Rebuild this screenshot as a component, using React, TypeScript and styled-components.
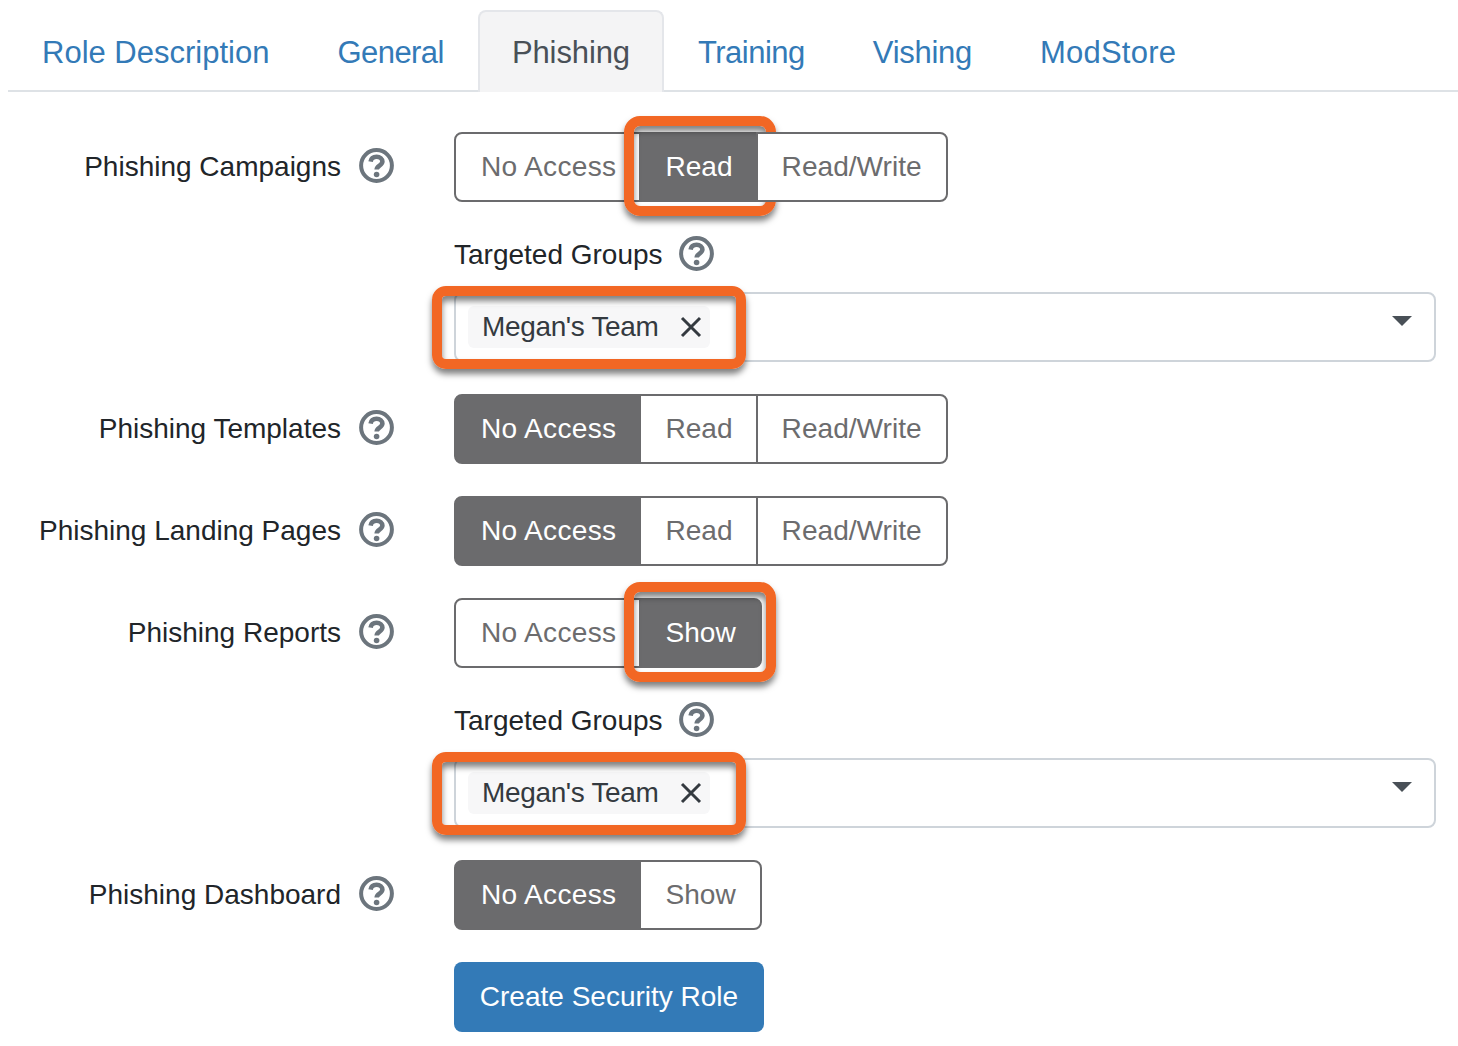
import React from 'react';
import styled, { createGlobalStyle } from 'styled-components';

const GlobalStyle = createGlobalStyle`
    html, body {
        margin: 0;
        background: #fff;
        font-family: 'Liberation Sans', Arial, sans-serif;
    }
`;

const tabs = [
    { name: 'Role Description', spacing: 0 },
    { name: 'General', spacing: -0.55 },
    { name: 'Phishing', spacing: -0.1 },
    { name: 'Training', spacing: -0.5 },
    { name: 'Vishing', spacing: -0.3 },
    { name: 'ModStore', spacing: 0.25 },
];

const HelpIcon = () => (
    <HelpSvg viewBox="0 0 35 35">
        <circle cx="17.5" cy="17.5" r="15.4" fill="none" stroke="currentColor" strokeWidth="4" />
        <path d="M11.6 13.6c.5-3.200 2.900-4.800 6-4.800 3.400 0 5.800 2 5.800 4.800 0 4-5.700 4-5.700 7.900" fill="none" stroke="currentColor" strokeWidth="4.600" />
        <circle cx="17.600" cy="26.500" r="2.800" fill="currentColor" />
    </HelpSvg>
);

interface AccessGroupProps {
    options: string[];
    active: string;
    marked?: boolean;
}

const AccessGroup = ({ options, active, marked }: AccessGroupProps) => (
    <Group>
        {options.map((option) => (
            <Segment key={option} $active={option === active}>
                {option}
                {marked && option === active && <ButtonHighlight />}
            </Segment>
        ))}
    </Group>
);

const TargetedGroups = () => (
    <TargetBlock>
        <TargetLabel>Targeted Groups <HelpIcon /></TargetLabel>
        <Select>
            <Tag>
                Megan's Team
                <svg width="22" height="22" viewBox="0 0 22 22">
                    <path d="M2 2 L20 20 M20 2 L2 20" stroke="#343a40" strokeWidth="3" fill="none" />
                </svg>
            </Tag>
            <Caret />
            <SelectHighlight />
        </Select>
    </TargetBlock>
);

export default function App() {
    return (
        <Page>
            <GlobalStyle />
            <Tabs>
                {tabs.map((tab) => (
                    <Tab key={tab.name} $active={tab.name === 'Phishing'} $spacing={tab.spacing}>{tab.name}</Tab>
                ))}
            </Tabs>
            <Form>
                <Row>
                    <Label>Phishing Campaigns <HelpIcon /></Label>
                    <Field>
                        <AccessGroup options={['No Access', 'Read', 'Read/Write']} active="Read" marked />
                        <TargetedGroups />
                    </Field>
                </Row>
                <Row>
                    <Label>Phishing Templates <HelpIcon /></Label>
                    <Field>
                        <AccessGroup options={['No Access', 'Read', 'Read/Write']} active="No Access" />
                    </Field>
                </Row>
                <Row>
                    <Label>Phishing Landing Pages <HelpIcon /></Label>
                    <Field>
                        <AccessGroup options={['No Access', 'Read', 'Read/Write']} active="No Access" />
                    </Field>
                </Row>
                <Row>
                    <Label>Phishing Reports <HelpIcon /></Label>
                    <Field>
                        <AccessGroup options={['No Access', 'Show']} active="Show" marked />
                        <TargetedGroups />
                    </Field>
                </Row>
                <Row>
                    <Label>Phishing Dashboard <HelpIcon /></Label>
                    <Field>
                        <AccessGroup options={['No Access', 'Show']} active="No Access" />
                    </Field>
                </Row>
                <Row>
                    <Label />
                    <Field>
                        <SubmitButton>Create Security Role</SubmitButton>
                    </Field>
                </Row>
            </Form>
        </Page>
    );
}

const Page = styled.div`
    width: 1458px;
    height: 1046px;
    padding: 10px 0 0 8px;
    box-sizing: border-box;
    overflow: hidden;
`;

const Tabs = styled.nav`
    display: flex;
    height: 82px;
    box-sizing: border-box;
    border-bottom: 2px solid #dee2e6;
    margin-bottom: 40px;
`;

const Tab = styled.a<{ $active?: boolean; $spacing: number }>`
    display: flex;
    align-items: center;
    height: 82px;
    box-sizing: border-box;
    padding: 1px 32px 0;
    border: 2px solid ${({ $active }) => ($active ? '#e4e6ea' : 'transparent')};
    border-bottom: 0;
    border-radius: 8px 8px 0 0;
    background: ${({ $active }) => ($active ? '#f4f4f5' : 'transparent')};
    color: ${({ $active }) => ($active ? '#495057' : '#337ab7')};
    font-size: 31px;
    letter-spacing: ${({ $spacing }) => $spacing}px;
`;

const Form = styled.div`
    display: flex;
    flex-direction: column;
    gap: 32px;
    padding-right: 22px;
`;

const Row = styled.div`
    display: flex;
    gap: 60px;
`;

const Label = styled.label`
    display: flex;
    justify-content: flex-end;
    align-items: center;
    gap: 18px;
    flex: 0 0 386px;
    height: 70px;
    padding-bottom: 1px;
    box-sizing: border-box;
    color: #212529;
    font-size: 28px;
`;

const HelpSvg = styled.svg`
    flex: none;
    width: 35px;
    height: 35px;
    margin-top: -3px;
    color: #6c757d;
`;

const Field = styled.div`
    flex: 1;
    display: flex;
    flex-direction: column;
    align-items: flex-start;
    gap: 32px;
`;

const Group = styled.div`
    display: inline-flex;
    height: 70px;
`;

const Segment = styled.div<{ $active?: boolean }>`
    position: relative;
    display: flex;
    align-items: center;
    box-sizing: border-box;
    padding: 0 23px 1px 24px;
    margin-left: -2px;
    border: 2px solid #6b6b6d;
    background: ${({ $active }) => ($active ? '#6b6b6d' : '#fff')};
    color: ${({ $active }) => ($active ? '#fff' : '#6c6c6e')};
    font-size: 28.1px;

    &:first-child {
        margin-left: 0;
        padding: 0 23px 1px 25px;
        border-radius: 8px 0 0 8px;
        letter-spacing: 0.3px;
    }

    &:last-child {
        padding-right: 24px;
        border-radius: 0 8px 8px 0;
    }
`;

const ButtonHighlight = styled.span`
    position: absolute;
    top: -18px;
    left: -17px;
    width: 152px;
    height: 100px;
    box-sizing: border-box;
    border: 10px solid #f26724;
    border-radius: 16px;
    box-shadow: 0 5px 6px rgba(0, 0, 0, 0.5), inset 0 5px 6px rgba(0, 0, 0, 0.5);
    pointer-events: none;
`;

const TargetBlock = styled.div`
    align-self: stretch;
    display: flex;
    flex-direction: column;
    gap: 18px;
`;

const TargetLabel = styled.label`
    display: flex;
    align-items: center;
    gap: 16px;
    height: 40px;
    padding-top: 1px;
    box-sizing: border-box;
    color: #212529;
    font-size: 28px;
`;

const Select = styled.div`
    position: relative;
    display: flex;
    align-items: center;
    height: 70px;
    box-sizing: border-box;
    padding: 0 22px 0 12px;
    border: 2px solid #ced4da;
    border-radius: 8px;
`;

const Tag = styled.span`
    display: flex;
    align-items: center;
    justify-content: space-between;
    height: 42px;
    width: 242px;
    box-sizing: border-box;
    padding: 0 8px 0 14px;
    border-radius: 6px;
    background: #f7f7f8;
    color: #343a40;
    font-size: 28px;
    letter-spacing: -0.35px;
    white-space: nowrap;
`;

const Caret = styled.span`
    width: 0;
    height: 0;
    margin: -12px 0 0 auto;
    border-left: 10px solid transparent;
    border-right: 10px solid transparent;
    border-top: 10px solid #495057;
`;

const SelectHighlight = styled.span`
    position: absolute;
    top: -8px;
    left: -24px;
    width: 314px;
    height: 83px;
    box-sizing: border-box;
    border: 10px solid #f26724;
    border-radius: 14px;
    box-shadow: 0 5px 6px rgba(0, 0, 0, 0.5), inset 0 5px 6px rgba(0, 0, 0, 0.5);
    pointer-events: none;
`;

const SubmitButton = styled.button`
    height: 70px;
    width: 310px;
    padding: 0 0 1px;
    border: 0;
    border-radius: 8px;
    background: #337ab7;
    color: #fff;
    font-family: inherit;
    font-size: 28px;
`;
